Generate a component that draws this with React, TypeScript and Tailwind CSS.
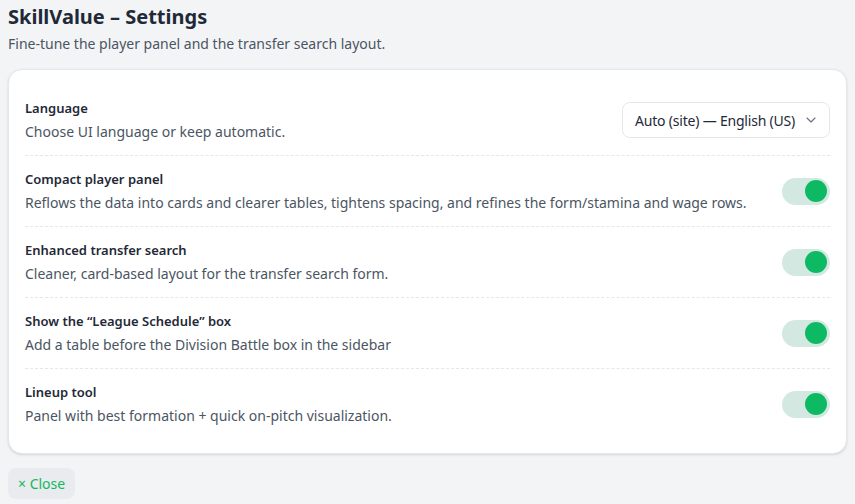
import { ChevronDown } from "lucide-react"

const rows = [
  {
    title: "Compact player panel",
    desc: "Reflows the data into cards and clearer tables, tightens spacing, and refines the form/stamina and wage rows.",
  },
  {
    title: "Enhanced transfer search",
    desc: "Cleaner, card-based layout for the transfer search form.",
  },
  {
    title: "Show the \u201cLeague Schedule\u201d box",
    desc: "Add a table before the Division Battle box in the sidebar",
  },
  {
    title: "Lineup tool",
    desc: "Panel with best formation + quick on-pitch visualization.",
  },
]

function Toggle() {
  return (
    <div className="flex h-[27px] w-[48px] shrink-0 items-center justify-end rounded-full bg-[#d2e8e0] px-[3px]">
      <div className="h-[22px] w-[22px] rounded-full bg-[#0dba63]" />
    </div>
  )
}

export default function App() {
  return (
    <div className="min-h-[504px] bg-[#f3f4f6] px-2 pt-[2px] font-['Noto_Sans',sans-serif] text-[#1f2937]">
      <h1 className="text-[20px] font-bold leading-[30px]">SkillValue – Settings</h1>
      <p className="mt-[2px] text-[14px] leading-[20px] text-[#4b5563]">
        Fine-tune the player panel and the transfer search layout.
      </p>

      <div className="mt-[15px] rounded-[14px] border border-[#e5e7eb] bg-white px-4 pb-3.5 pt-[15px] shadow-sm">
        <div className="flex items-center justify-between border-b border-dashed border-[#e5e7eb] py-[13px]">
          <div>
            <div className="text-[13px] font-semibold leading-[20px]">Language</div>
            <div className="mt-1 text-[14px] leading-[20px] text-[#4b5563]">Choose UI language or keep automatic.</div>
          </div>
          <div className="flex h-[36px] w-[208px] items-center justify-between rounded-lg border border-[#e5e7eb] bg-white pl-3 pr-2.5 text-[14px] tracking-[-0.2px]">
            <span>Auto (site) — English (US)</span>
            <ChevronDown className="h-4 w-4 text-[#6b7280]" strokeWidth={1.75} />
          </div>
        </div>
        {rows.map((r, i) => (
          <div
            key={r.title}
            className={`flex items-center justify-between gap-4 py-[13px] ${i < rows.length - 1 ? "border-b border-dashed border-[#e5e7eb]" : ""}`}
          >
            <div>
              <div className="text-[13px] font-semibold leading-[20px]">{r.title}</div>
              <div className="mt-1 text-[14px] leading-[20px] text-[#4b5563]">{r.desc}</div>
            </div>
            <Toggle />
          </div>
        ))}
      </div>

      <button className="mt-[14px] h-[31px] rounded-lg bg-[#e9ebee] px-[10px] text-[14px] text-[#10b960]">
        × Close
      </button>
    </div>
  )
}
